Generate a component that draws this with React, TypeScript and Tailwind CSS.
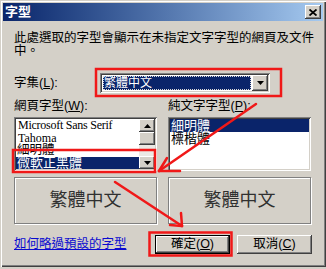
const cjk = "font-['Liberation_Sans','Noto_Sans_CJK_TC',sans-serif]";
const raised =
  "shadow-[inset_-1px_-1px_#404040,inset_1px_1px_#ffffff,inset_-2px_-2px_#808080,inset_2px_2px_#d4d0c8] bg-[#d4d0c8]";
const sunken =
  "shadow-[inset_1px_1px_#808080,inset_-1px_-1px_#ffffff,inset_2px_2px_#404040,inset_-2px_-2px_#d4d0c8]";

function Arrow({ dir }: { dir: "up" | "down" }) {
  return (
    <svg width="7" height="4" viewBox="0 0 7 4">
      {dir === "up" ? <path d="M3.5 0 L7 4 L0 4 Z" fill="#000" /> : <path d="M0 0 L7 0 L3.5 4 Z" fill="#000" />}
    </svg>
  );
}

function ScrollBtn({ dir }: { dir: "up" | "down" }) {
  return (
    <div className={`h-[13px] flex items-center justify-center ${raised}`}>
      <Arrow dir={dir} />
    </div>
  );
}

function Annotations() {
  // red marks drawn over the screenshot
  return (
    <svg className="absolute inset-0 pointer-events-none" width="326" height="269" viewBox="0 0 326 269">
      <g stroke="#f01818" strokeWidth="2.5" fill="none" strokeLinecap="round">
        <rect x="96" y="69" width="185" height="27" />
        <rect x="13" y="150" width="142" height="22" />
        <rect x="149.5" y="232.5" width="82" height="23" />
        <path d="M256 104 L159 171" />
        <path d="M159 171 L167 158" />
        <path d="M159 171 L180 171" />
        <path d="M115 182 L182 226" />
        <path d="M182 226 L181 213" />
        <path d="M182 226 L170 225" />
      </g>
    </svg>
  );
}

export default function App() {
  return (
    <div className={`relative w-[326px] h-[269px] bg-[#d4d0c8] overflow-hidden text-black ${cjk}`}>
      <div className="w-[326px] h-[267px] p-[3px] flex flex-col shadow-[inset_1px_1px_#d4d0c8,inset_2px_2px_#ffffff,inset_-1px_-1px_#404040,inset_-2px_-2px_#808080]">
        {/* Title bar */}
        <div className="h-[18px] flex items-center justify-between pl-[2px] pr-[2px] bg-linear-to-r from-[#0a246a] to-[#a6caf0]">
          <span className="text-white font-bold text-[13px] leading-[18px]">字型</span>
          <div className={`w-[16px] h-[14px] flex items-center justify-center ${raised}`}>
            <svg width="8" height="7" viewBox="0 0 8 7">
              <path d="M0.5 0.5 L7.5 6.5 M7.5 0.5 L0.5 6.5" stroke="#000" strokeWidth="1.8" />
            </svg>
          </div>
        </div>

        {/* Body */}
        <div className="flex flex-col pl-[11px] pr-[11px]">
          <p className="mt-[11px] h-[26px] text-[12.5px] leading-[13px] whitespace-nowrap">
            此處選取的字型會顯示在未指定文字字型的網頁及文件
            <br />
            中。
          </p>

          <div className="mt-[15px] h-[20px] flex items-center">
            <div className="w-[86px] text-[12.5px]">
              字集(<u>L</u>):
            </div>
            <div className={`w-[170px] h-[20px] p-[2px] bg-white flex ${sunken}`}>
              <div className="flex-1 p-[1px]">
                <div className="h-full bg-[#0a246a] text-white text-[12px] leading-[14px] pl-[1px] outline-1 outline-dotted outline-offset-[-1px] outline-[#d8d8d8]">
                  繁體中文
                </div>
              </div>
              <div className={`w-[16px] h-[16px] flex items-center justify-center ${raised}`}>
                <Arrow dir="down" />
              </div>
            </div>
          </div>

          <div className="mt-[7px] h-[13px] flex gap-[11px] text-[12.5px] leading-[13px]">
            <div className="w-[143px]">
              網頁字型(<u>W</u>):
            </div>
            <div className="w-[143px]">
              純文字字型(<u>P</u>):
            </div>
          </div>

          <div className="mt-[4px] flex gap-[11px]">
            <div className={`w-[143px] h-[54px] p-[2px] bg-white flex ${sunken}`}>
              <div className="flex-1 flex flex-col">
                <div className="h-[12.5px] leading-[12.5px] pl-[2px] text-[12px] tracking-[-0.25px] font-['Liberation_Serif',serif]">
                  Microsoft Sans Serif
                </div>
                <div className="h-[12.5px] leading-[12.5px] pl-[2px] text-[12px] font-['Liberation_Serif',serif]">
                  Tahoma
                </div>
                <div className="h-[12.5px] leading-[12.5px] pl-[1px] text-[12.5px]">細明體</div>
                <div className="h-[12.5px] leading-[12.5px] pl-[1px] text-[13px] bg-[#0a246a] text-white">
                  微軟正黑體
                </div>
              </div>
              <div className="w-[16px] flex flex-col">
                <ScrollBtn dir="up" />
                <div className={`h-[13px] ${raised}`} />
                <div className="flex-1 bg-[#ebe9e5]" />
                <ScrollBtn dir="down" />
              </div>
            </div>
            <div className={`w-[143px] h-[54px] p-[2px] bg-white flex flex-col ${sunken}`}>
              <div className="h-[13px] leading-[13px] pl-[1px] text-[13px] bg-[#0a246a] text-white">細明體</div>
              <div className="h-[13px] leading-[13px] pl-[1px] text-[13px]">標楷體</div>
            </div>
          </div>

          <div className="mt-[6px] flex gap-[11px]">
            <div className="w-[143px] h-[47px] border border-[#808080] shadow-[inset_1px_1px_#ffffff,1px_1px_#ffffff] flex items-center justify-center text-[18px] text-[#303030]">
              繁體中文
            </div>
            <div className="w-[143px] h-[47px] border border-[#808080] shadow-[inset_1px_1px_#ffffff,1px_1px_#ffffff] flex items-center justify-center text-[18px] text-[#303030]">
              繁體中文
            </div>
          </div>

          <div className="mt-[11px] h-[19px] flex items-center">
            <span className="text-[12.5px] underline text-[#0a0ad0]">如何略過預設的字型</span>
            <div className="ml-auto flex gap-[7px]">
              <div className="w-[75px] h-[19px] border border-black">
                <div className={`h-full flex items-center justify-center text-[12.5px] ${raised}`}>
                  確定(<u>O</u>)
                </div>
              </div>
              <div className={`w-[75px] h-[19px] flex items-center justify-center text-[12.5px] ${raised}`}>
                取消(<u>C</u>)
              </div>
            </div>
          </div>
        </div>
      </div>
      <Annotations />
    </div>
  );
}
